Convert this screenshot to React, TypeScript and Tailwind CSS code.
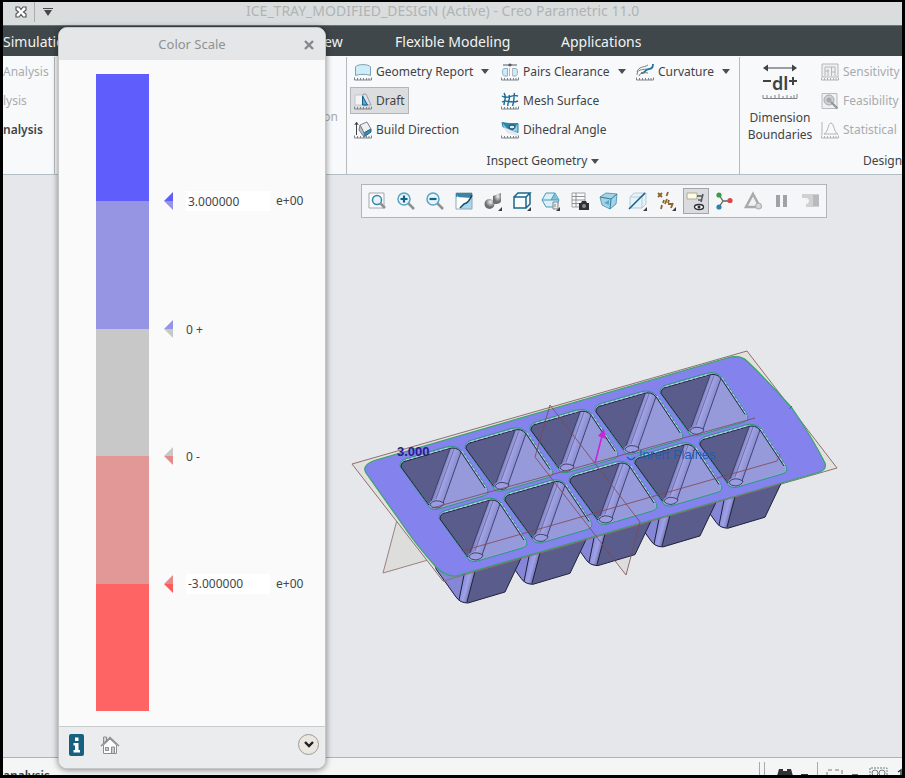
import type { ReactNode } from 'react'
import clsx from 'clsx'

const Caret = () => (
  <svg viewBox="0 0 8 5" className="h-[5px] w-2 shrink-0" fill="#4a4f52">
    <path d="M0 0h8L4 5z" />
  </svg>
)

function Glyph({ children, className }: { children: ReactNode; className?: string }) {
  return (
    <svg viewBox="0 0 18 18" className={clsx('size-[18px] shrink-0', className)} fill="none">
      {children}
    </svg>
  )
}

const Ruler = ({ color = '#7d8386' }: { color?: string }) => (
  <path d="M.5 14.5v2.500h17v-2.500M3.500 17v-2M6.500 17v-2M9.500 17v-2M12.500 17v-2M15 17v-2" stroke={color} />
)

const reportIcon = (
  <Glyph>
    <path d="M1.500 12.500V4C3 .8 15 .8 16.500 4v8.500c-3-1.500-12-1.500-15 0z" fill="#cdeef8" stroke="#7fa0b0" />
    <Ruler />
  </Glyph>
)

const draftIcon = (
  <Glyph>
    <path d="M1 3h8v10H1z" fill="#f3f4f5" stroke="#c3c7ca" />
    <path d="M9 2h3l5 11H9z" fill="#dfe3e6" stroke="#9aa1a5" />
    <path d="M8.500 13V4l5 9z" fill="#57a9cf" stroke="#145f88" />
    <Ruler />
  </Glyph>
)

const buildIcon = (
  <Glyph>
    <path d="M2.500 14V2M.8 4 2.500 1.200 4.200 4" stroke="#3c4245" />
    <path d="m6 4 7-3 4 7-7 4z" fill="#eef0f1" stroke="#7c8488" />
    <path d="m10 12 7-4v3l-7 5z" fill="#3c8db5" stroke="#1d6389" />
    <path d="m6 4 4 8v4L5 9z" fill="#b9c2c7" stroke="#7c8488" />
    <Ruler />
  </Glyph>
)

const pairsIcon = (
  <Glyph>
    <path d="M2 2h14" stroke="#53595c" />
    <path d="M9 .2 11 2 9 3.800 7 2z" fill="#53595c" />
    <path d="M6.500 5.500H3c-2 .5-2 6.500 0 7.500h3.500zM11.500 5.500H15c2 .5 2 6.500 0 7.500h-3.500z" fill="#cdeaf6" stroke="#8db3c7" />
    <path d="M8.500 5v8M11.500 5v8" stroke="#b5babd" />
    <Ruler />
  </Glyph>
)

const meshIcon = (
  <Glyph>
    <path
      d="M1 4c5 4 9-2 16 0M1 10c5-3 9 2 16-1M3 1c3 4 0 8 0 12M8 3c2 4-2 7-1 11M13.500 1c-1 5 0 8-2 13"
      stroke="#1c6c93"
      strokeWidth="1.400"
    />
    <Ruler />
  </Glyph>
)

const dihedralIcon = (
  <Glyph>
    <path d="M1 1.500 8 3l9-.5v9L9 10 2 6z" fill="#8fd0ea" stroke="#2a7da3" />
    <path d="m1 1.500 5 6 5 3 6-8z" fill="#2f86ad" />
    <ellipse cx="11" cy="6" rx="3" ry="2" fill="#d4eef8" stroke="#12384a" />
    <path d="m2 6 15 6v3L6 12z" fill="#e4e8ea" />
    <Ruler />
  </Glyph>
)

const curvatureIcon = (
  <Glyph>
    <path d="M5 10c5 1 3-4 8-4 3 0 4-2 4-5" stroke="#1c77a8" strokeWidth="1.800" />
    <path d="M1 9c2-6 6-4 11-7M1 12c0-6 5-5 9-6M3 13c1-3 4-4 9-3" stroke="#767d81" />
    <Ruler />
  </Glyph>
)

const sensitivityIcon = (
  <Glyph>
    <path d="M1 1h16v13H1z" fill="#eff0f1" stroke="#b4b8ba" />
    <path d="M4 4h10v9M4 4v9M7 6v7M10.500 4v9M4 8h4M10 9h4" stroke="#b4b8ba" />
    <Ruler color="#aeb2b4" />
  </Glyph>
)

const feasibilityIcon = (
  <Glyph>
    <path d="M1 1.500h15v15H1z" fill="#eff0f1" stroke="#b9bcbe" />
    <circle cx="8" cy="8" r="5" fill="#cfd2d4" stroke="#a5aaad" />
    <circle cx="8" cy="8" r="2.500" fill="#a5aaad" />
    <path d="m10 10 6.500 6.500" stroke="#8f9497" strokeWidth="2" />
  </Glyph>
)

const statisticalIcon = (
  <Glyph>
    <path d="M1 1v13M3 13c4-1 4-11 7-11s3 10 7 11z" stroke="#b0b4b6" />
    <Ruler color="#b0b4b6" />
  </Glyph>
)

type Command = { label: string; icon: ReactNode; menu?: boolean; pressed?: boolean }

const inspectColumns: { width: string; items: Command[] }[] = [
  {
    width: 'w-[147px]',
    items: [
      { label: 'Geometry Report', icon: reportIcon, menu: true },
      { label: 'Draft', icon: draftIcon, pressed: true },
      { label: 'Build Direction', icon: buildIcon },
    ],
  },
  {
    width: 'w-[135px]',
    items: [
      { label: 'Pairs Clearance', icon: pairsIcon, menu: true },
      { label: 'Mesh Surface', icon: meshIcon },
      { label: 'Dihedral Angle', icon: dihedralIcon },
    ],
  },
  { width: 'w-[104px]', items: [{ label: 'Curvature', icon: curvatureIcon, menu: true }] },
]

const designStudies: Command[] = [
  { label: 'Sensitivity', icon: sensitivityIcon },
  { label: 'Feasibility', icon: feasibilityIcon },
  { label: 'Statistical', icon: statisticalIcon },
]

function CommandButton({ label, icon, menu, pressed }: Command) {
  return (
    <button
      type="button"
      aria-pressed={pressed}
      className={clsx(
        'flex h-[27px] w-max items-center gap-1 border px-[3px] whitespace-nowrap',
        pressed ? 'border-[#b3b5b8] bg-[#dcdddf]' : 'border-transparent'
      )}
    >
      {icon}
      <span>{label}</span>
      {menu && (
        <span className="pl-1">
          <Caret />
        </span>
      )}
    </button>
  )
}

function TitleBar() {
  return (
    <header className="flex h-[23px] shrink-0 items-center bg-[#d9dddd]">
      <div className="flex h-full w-[243px] shrink-0 items-center pb-[3px] pl-3">
        <button type="button" aria-label="Close window">
          <svg viewBox="0 0 12 12" className="size-3">
            <path
              d="M1 1h3l2 2.500L8 1h3v3L8.500 6 11 8v3H8L6 8.500 4 11H1V8l2.500-2L1 4z"
              fill="#fff"
              stroke="#55595b"
              strokeWidth="1.200"
            />
          </svg>
        </button>
        <span className="ml-[7px] h-full w-px bg-[#a9adaf]" />
        <button type="button" aria-label="Customize toolbar" className="ml-2">
          <svg viewBox="0 0 10 8" className="h-2 w-[10px]" fill="#45494b">
            <path d="M0 0h10v1H0zM1 2h8L5 8z" />
          </svg>
        </button>
      </div>
      <h1 className="pb-[5px] text-sm leading-5 whitespace-nowrap text-[#b0b4b5]">
        ICE_TRAY_MODIFIED_DESIGN (Active) - Creo Parametric 11.0
      </h1>
    </header>
  )
}

function MenuTabs() {
  return (
    <nav className="flex h-[31px] shrink-0 items-center border-t border-[#6a7274] bg-[#3f474a] pt-px text-sm text-[#f1f3f3]">
      <a href="#simulation" className="w-[309px]">
        Simulation
      </a>
      <a href="#view" className="w-[83px]">
        View
      </a>
      <a href="#flexible" className="w-[166px]">
        Flexible Modeling
      </a>
      <a href="#applications">Applications</a>
    </nav>
  )
}

function Ribbon() {
  return (
    <section className="flex h-[119px] shrink-0 border-b border-[#b4bfc5] bg-[#f8f9fb] pt-px text-xs leading-4 text-[#3f4447]">
      <ul className="w-[52px] shrink-0 overflow-hidden border-r border-[#b7babc]">
        <li className="flex h-[29px] items-center text-[#a8abad]">Analysis</li>
        <li className="flex h-[29px] items-center text-[#a8abad]">lysis</li>
        <li className="flex h-[29px] items-center font-semibold">nalysis</li>
      </ul>
      <div className="flex w-[292px] shrink-0 justify-end border-r border-[#b7babc] pt-[52px] pr-2 text-[#a8abad]">
        Section
      </div>
      <div className="flex w-[393px] shrink-0 flex-col border-r border-[#b7babc]">
        <div className="flex pl-[3px]">
          {inspectColumns.map((column, i) => (
            <ul key={i} className={column.width}>
              {column.items.map((item) => (
                <li key={item.label} className="flex h-[29px] items-center">
                  <CommandButton {...item} />
                </li>
              ))}
            </ul>
          ))}
        </div>
        <button type="button" className="flex flex-1 items-center justify-center gap-1 pt-1">
          Inspect Geometry <Caret />
        </button>
      </div>
      <div className="flex min-w-0 flex-1 overflow-hidden">
        <button type="button" className="flex h-full w-20 shrink-0 flex-col items-center gap-2 pt-[6px] leading-[17px]">
          <svg viewBox="0 0 36 38" className="h-[38px] w-9 shrink-0" fill="none" stroke="#3e4346">
            <path d="M3 5h30" />
            <path d="M6 1.500 1 5l5 3.500zM30 1.500 35 5l-5 3.500z" fill="#3e4346" stroke="none" />
            <path d="M1 18h8M27 18h8M31 14v8" strokeWidth="2" />
            <text x="10" y="27" fontSize="18" fontWeight="600" fill="#3e4346" stroke="none">
              dl
            </text>
            <path d="M1 32v3.500h34V31M5 35v-3M9 35v-2M13 35v-3M17 35v-4M21 35v-2M25 35v-3M29 35v-2M32 35v-3" stroke="#7f8588" />
          </svg>
          <span>
            Dimension
            <br />
            Boundaries
          </span>
        </button>
        <div className="flex min-w-0 flex-col text-[#a8abad]">
          <ul>
            {designStudies.map((item) => (
              <li key={item.label} className="-ml-[3px] flex h-[29px] items-center">
                <CommandButton {...item} />
              </li>
            ))}
          </ul>
          <span className="flex flex-1 items-center pt-1 pl-[43px] text-[#3f4447]">Design</span>
        </div>
      </div>
    </section>
  )
}

const Corner = () => <path d="M19 16v4h-4z" fill="#3b3f41" />

const viewTools: { label: string; pressed?: boolean; art: ReactNode }[] = [
  {
    label: 'Refit',
    art: (
      <>
        <path d="M2 2h15v15H2z" fill="#fbfbfb" stroke="#a3a7a9" />
        <circle cx="10" cy="9" r="4.500" fill="#e6f5fb" stroke="#3286ae" strokeWidth="1.500" />
        <path d="m13 12 5 5" stroke="#8d9193" strokeWidth="2.500" />
      </>
    ),
  },
  {
    label: 'Zoom In',
    art: (
      <>
        <path d="m12 12 6 6" stroke="#8d9193" strokeWidth="2.500" />
        <circle cx="8" cy="8" r="6" fill="#e6f5fb" stroke="#5ba3c4" strokeWidth="1.500" />
        <path d="M8 4.500v7M4.500 8h7" stroke="#14618b" strokeWidth="2.200" />
      </>
    ),
  },
  {
    label: 'Zoom Out',
    art: (
      <>
        <path d="m12 12 6 6" stroke="#8d9193" strokeWidth="2.500" />
        <circle cx="8" cy="8" r="6" fill="#e6f5fb" stroke="#5ba3c4" strokeWidth="1.500" />
        <path d="M4.500 8h7" stroke="#14618b" strokeWidth="2.200" />
      </>
    ),
  },
  {
    label: 'Repaint',
    art: (
      <>
        <path d="M2 2h16v16H2z" fill="#fff" />
        <path d="M18 2v16H6l4-5c4-1 7-5 8-11z" fill="#a9d8ea" />
        <path d="M2 2h16v16H2z" stroke="#8fa9b6" />
        <path d="M2 6V2h16v5z" fill="#3c83a5" />
        <path d="M3 17V5l9 7z" fill="#fff" />
        <path d="m6 17 4-4c4-1 6-4 8-9" stroke="#17506d" strokeWidth="1.600" />
      </>
    ),
  },
  {
    label: 'Rendering Options',
    art: (
      <>
        <circle cx="6.500" cy="13" r="5" fill="url(#metal)" />
        <path d="M10 5 18 2v8c0 3-6 4-8 2z" fill="url(#metal)" />
        <Corner />
      </>
    ),
  },
  {
    label: 'Display Style',
    art: (
      <>
        <path d="M2 6 6 2h12l-4 4v11H2z" fill="#f6fbfd" />
        <path d="M2 6h12v11H2zM2 6l4-4h12l-4 4M18 2v11l-4 4" stroke="#1b678d" strokeWidth="1.500" />
        <Corner />
      </>
    ),
  },
  {
    label: 'Saved Orientations',
    art: (
      <>
        <path d="m1 9 4-7h9l4 7-3 7H5z" fill="#d8f0f8" stroke="#4d98ba" />
        <path d="m10 9 4-7 4 7z" fill="#7fc2dd" />
        <path d="M1 9h17M10 9l4-7" stroke="#4d98ba" />
        <path d="M12 11h5v7h-5zM14 13v3" fill="#eceded" stroke="#808587" />
        <Corner />
      </>
    ),
  },
  {
    label: 'View Manager',
    art: (
      <>
        <path d="M2 2h13v14H2z" fill="#fafafa" stroke="#9da1a3" />
        <path d="M2 5.500h13M2 9h13M2 12.500h13M6 2v14" stroke="#8d9193" />
        <path d="M9 12h2l1-2h4l1 2h2v7H9z" fill="#2d3133" />
        <circle cx="14" cy="15" r="2" fill="#888d8f" />
      </>
    ),
  },
  {
    label: 'Perspective View',
    art: (
      <>
        <path d="m1 6 6-4 11 1-1 10-6 5-8-4z" fill="#a4d3e6" stroke="#5b9dbb" />
        <path d="m1 6 11 2 6-5M12 8l-1 10" stroke="#35799a" />
        <path d="m5 12 5-3v5z" fill="#5aa6c8" />
      </>
    ),
  },
  {
    label: 'Section',
    art: (
      <>
        <path d="M2 6 6 2h12v11l-4 4H2z" fill="#e5f3f8" stroke="#b6cbd5" />
        <path d="M2 6h12v11M14 6l4-4" stroke="#b6cbd5" />
        <path d="M1 18 17 2" stroke="#17618a" strokeWidth="1.600" />
        <Corner />
      </>
    ),
  },
  {
    label: 'Datum Display',
    art: (
      <>
        <path
          d="m1 2 4 4M5 2 1 6M11 1l-1.500 4M7 9l-1 3M5 14l-1 4M10 8l-2 5M11 13h5M12 9l-1 3M16 12l-2 5"
          stroke="#8a642b"
          strokeWidth="1.800"
        />
        <Corner />
      </>
    ),
  },
  {
    label: 'Annotation Display',
    pressed: true,
    art: (
      <>
        <path d="M1 2h10v6H1z" fill="#fffbe9" stroke="#b0a98e" />
        <path d="M11 5h6M17 3l-2 8M12 9h3" stroke="#55595b" strokeWidth="1.600" />
        <ellipse cx="13" cy="16" rx="4.500" ry="2.500" fill="#fff" stroke="#2c2f31" strokeWidth="1.400" />
        <circle cx="13" cy="16" r="1.500" fill="#2c2f31" />
      </>
    ),
  },
  {
    label: 'Spin Center',
    art: (
      <>
        <path d="m4 4 4 6-4 6M8 10h7" stroke="#5f6466" strokeWidth="1.300" />
        <circle cx="4" cy="4" r="2.600" fill="#3e9a49" />
        <circle cx="4" cy="16" r="2.600" fill="#2b83b5" />
        <circle cx="15" cy="9.500" r="2.600" fill="#d8464a" />
      </>
    ),
  },
  {
    label: 'Simulate',
    art: (
      <>
        <path d="m9 3 7 13H2z" fill="#f1f1f1" stroke="#a8abad" strokeWidth="2.500" />
        <circle cx="14.500" cy="15" r="3" fill="#d5d7d8" stroke="#a8abad" />
      </>
    ),
  },
  { label: 'Pause', art: <path d="M3 4h4v12H3zM10 4h4v12h-4z" fill="#a0a3a6" /> },
  {
    label: 'Results',
    art: (
      <>
        <path d="M0 3h17v13H4v-3c4 0 4-6 0-6H0z" fill="#cfd1d3" />
        <path d="M11 4h6v11h-6z" fill="#b8bbbe" />
      </>
    ),
  },
]

function ViewToolbar() {
  return (
    <div role="toolbar" aria-label="Graphics" className="mt-[9px] ml-[358px] flex h-[34px] w-max items-center border border-[#b2b4b8] bg-[#f5f6f7]">
      {viewTools.map((tool) => (
        <button
          key={tool.label}
          type="button"
          aria-label={tool.label}
          aria-pressed={tool.pressed}
          className="flex w-[29px] justify-center"
        >
          <span
            className={clsx(
              'flex size-[26px] items-center justify-center border',
              tool.pressed ? 'border-[#a4a6aa] bg-[#dadbde]' : 'border-transparent'
            )}
          >
            <svg viewBox="0 0 20 20" className="size-5" fill="none">
              {tool.art}
            </svg>
          </span>
        </button>
      ))}
    </div>
  )
}

// One cavity of the tray, drawn from the top-left corner of its rim
function Pocket({ x, y }: { x: number; y: number }) {
  return (
    <g transform={`translate(${x} ${y})`} strokeLinejoin="round">
      <path d="M0 4Q0-1 5-3L46-15Q56-18 63-10L87 26Q90 32 83 34L42 46Q34 49 30 46Z" fill="#93a6dd" stroke="#2a9a78" />
      <path d="M1 5Q1 0 6-1L48-13Q56-16 61-10L85 26Q88 31 82 33L42 45Q34 47 31 44Z" fill="#979ada" />
      <path d="M1 5Q1 0 6-1L50-13 31 39 29 42Z" fill="#5a5c8b" />
      <path d="M50-13Q57-15 61-10L43 41Q37 36 31 39Z" fill="url(#pocket-fillet)" />
      <path d="M50-13 31 39M61-10 43 41" stroke="#2c2e55" strokeWidth=".8" />
      <path d="M54-13 36 37" stroke="#4a4d80" strokeWidth=".6" />
      <path d="M30 42Q35 36 44 41 43 45 37 46 32 46 30 43Z" fill="#9b9de0" stroke="#2c2e55" strokeWidth=".8" />
      <path d="M1 5Q1 0 6-1L48-13Q56-16 61-10L85 26M1 5 29 43" stroke="#20223d" />
      <path d="M62-11 87 27M6-2 48-14" stroke="#c9ecec" strokeWidth=".8" strokeDasharray="3 2" />
    </g>
  )
}

function Cup({ index }: { index: number }) {
  return (
    <g transform={`translate(${index * 65} ${index * -18.7})`} strokeLinejoin="round">
      <path d="M435 562 436 569 456 597Q460 603 468 603L505 592 524 552 470 545Z" fill="#5a5c8b" />
      <path d="M435 562 436 569 456 597 459 600 467 560Z" fill="#8587d6" />
      <path d="M467 560 459 600Q462 603 467 602L478 560Z" fill="url(#cup-fillet)" />
      <path d="M435 562 436 569 456 597Q460 603 468 603L505 592 524 552M467 560 459 600M478 560 467 602" stroke="#20223d" fill="none" />
    </g>
  )
}

const slots = [4, 3, 2, 1, 0]

function IceTray() {
  return (
    <svg viewBox="350 345 490 262" className="mt-[127px] ml-[347px] h-[262px] w-[490px]" role="img" aria-label="Ice tray model" fill="none">
      <defs>
        <linearGradient id="pocket-fillet" gradientUnits="userSpaceOnUse" x1="40" y1="10" x2="52" y2="14">
          <stop offset="0" stopColor="#7073ae" />
          <stop offset=".45" stopColor="#a3a5e6" />
          <stop offset="1" stopColor="#8c8fd2" />
        </linearGradient>
        <linearGradient id="cup-fillet" gradientUnits="userSpaceOnUse" x1="463" y1="579" x2="474" y2="582">
          <stop offset="0" stopColor="#8a8cdd" />
          <stop offset=".5" stopColor="#9fa1e8" />
          <stop offset="1" stopColor="#6669a0" />
        </linearGradient>
        <radialGradient id="metal" cx=".6" cy=".3">
          <stop offset="0" stopColor="#f2f2f2" />
          <stop offset="1" stopColor="#6b6e70" />
        </radialGradient>
      </defs>
      <path d="m397 520-14 53 52-15z" fill="#dddddc" stroke="#9c8182" />
      <path d="m626 575-15-22 20-4z" fill="#dddddc" />
      <path d="M352 464 747 351 837 468 443 581Z" fill="#e2e1dd" stroke="#8d6f70" />
      {slots.map((i) => (
        <Cup key={i} index={i} />
      ))}
      <path
        d="M376 460 727 358Q740 354 747 361 770 383 792 408 812 437 825 463 827 469 820 472L456 576Q446 577 436 567 416 545 400 521L366 473Q361 465 376 460Z"
        fill="#8482ec"
        stroke="#35a56b"
        strokeWidth="1.200"
      />
      <path d="M443 581 780 484" stroke="#8d6f70" />
      {slots.map((i) => (
        <Pocket key={i} x={400 + i * 65} y={462 - i * 18.4} />
      ))}
      {slots.map((i) => (
        <Pocket key={i} x={439 + i * 65} y={514 - i * 18.5} />
      ))}
      <path d="M550 405 640 522 626 575 535 457ZM462 551 777 461 780 454M432 508 755 418M789 409 792 406" stroke="#7f4650" strokeOpacity=".8" />
      <path d="m595 463 7-27" stroke="#c726d8" strokeWidth="1.600" />
      <path d="m604 429 2 10-8-3z" fill="#c726d8" />
      <text x="397" y="456" fontSize="13" fontWeight="700" fill="#2a1a8c" className="font-['Liberation_Sans']">
        3.000
      </text>
      <path d="M627 457q4 5 8 0M633 451v2" stroke="#1f5fb0" strokeWidth="1.300" />
      <text x="639" y="459" fontSize="13" fill="#1c5fb2" className="font-['Liberation_Sans']">
        Inrert Plaines
      </text>
    </svg>
  )
}

function StatusBar() {
  return (
    <footer className="flex h-[18px] shrink-0 items-start justify-between overflow-hidden border-t border-[#a9b5bc] bg-[#f4f6f6] text-[#3a3e40]">
      <span className="pt-[10px] text-xs leading-4 font-semibold">analysis</span>
      <div className="flex items-start gap-2 pt-1">
        <span className="flex h-4 gap-1 pr-1">
          <span className="w-px bg-[#a7aaac]" />
          <span className="w-px bg-[#a7aaac]" />
        </span>
        <svg viewBox="0 0 32 14" className="h-[14px] w-8" fill="#303335">
          <path d="M2 7h4v2h4V7h4l2 7H0zM24 12h7v2h-7z" />
        </svg>
        <span className="h-4 w-px bg-[#a7aaac]" />
        <svg viewBox="0 0 76 14" className="h-[14px] w-[76px]" fill="none" stroke="#777b7d">
          <path d="M1 14V8h15v6" strokeDasharray="4 3" />
          <path d="M26 13h6M75 14V8l-3 2" stroke="#3a3e40" strokeWidth="1.500" />
          <path d="M44 14V6h17v8" strokeDasharray="2 1" />
          <circle cx="49" cy="11" r="3" />
          <circle cx="56" cy="11" r="3" />
        </svg>
      </div>
    </footer>
  )
}

const scaleColors = ['bg-[#5f5efd]', 'bg-[#9695e3]', 'bg-[#c8c8c8]', 'bg-[#e19897]', 'bg-[#fe6464]']

const thresholds = [
  { id: 'upper', value: '3.000000', above: '#5f5efd', below: '#9695e3' },
  { id: 'zero-plus', text: '0 +', above: '#9695e3', below: '#c8c8c8' },
  { id: 'zero-minus', text: '0 -', above: '#c8c8c8', below: '#e58a8a' },
  { id: 'lower', value: '-3.000000', above: '#e58a8a', below: '#fe5a5a' },
]

function ColorScaleDialog() {
  return (
    <div
      role="dialog"
      aria-labelledby="scale-title"
      className="absolute top-[25px] bottom-[6px] left-[55px] flex w-[268px] flex-col overflow-hidden rounded-[9px] border border-[#c4c6c8] bg-[#fafafa] text-[#444749] shadow-[0_1px_6px_rgba(0,0,0,0.45)]"
    >
      <div className="grid h-8 shrink-0 grid-cols-[32px_1fr_32px] items-center bg-[#e5e6e8] pt-px text-[#8e9193]">
        <h2 id="scale-title" className="col-start-2 text-center text-[13px]">
          Color Scale
        </h2>
        <button type="button" aria-label="Close" className="flex justify-center">
          <svg viewBox="0 0 10 10" className="size-[10px]" stroke="#85888a" strokeWidth="2.400">
            <path d="m1 1 8 8M9 1 1 9" />
          </svg>
        </button>
      </div>
      <div className="flex flex-1 pt-[14px] pb-[15px] pl-[37px] text-xs">
        <div className="flex w-[53px] flex-col">
          {scaleColors.map((color) => (
            <div key={color} className={clsx('flex-1', color)} />
          ))}
        </div>
        <div className="flex flex-1 flex-col pl-[14px]">
          <span className="flex-1" />
          {thresholds.map((t) => (
            <div key={t.id} className="flex flex-[2] items-center">
              <svg viewBox="0 0 10 18" className="h-[18px] w-[10px]">
                <path d="M1 9 10 0v9z" fill={t.above} />
                <path d="M1 9h9v9z" fill={t.below} />
              </svg>
              {t.value ? (
                <label className="flex items-center">
                  <input
                    aria-label={`${t.id} limit`}
                    defaultValue={t.value}
                    className="ml-[13px] h-5 w-[84px] bg-white px-[2px]"
                  />
                  <span className="pl-[6px]">e+00</span>
                </label>
              ) : (
                <span className="pt-[2px] pl-[13px]">{t.text}</span>
              )}
            </div>
          ))}
          <span className="flex-1" />
        </div>
      </div>
      <div className="flex h-[42px] shrink-0 items-center border-t border-[#c9cccf] bg-[#ebeced] px-[6px] pb-[6px]">
        <button type="button" aria-label="Information" className="px-1">
          <svg viewBox="0 0 15 22" className="h-[22px] w-[15px]">
            <rect width="15" height="22" rx="2" fill="#17607f" />
            <path d="M6 3.500h3.500V7H6zM4.500 9h5v7H11v2.500H4.500V16H6v-4.500H4.500z" fill="#fff" />
          </svg>
        </button>
        <button type="button" aria-label="Reset" className="ml-3">
          <svg viewBox="0 0 20 20" className="size-5" fill="none" stroke="#8b8f91">
            <path d="M3.500 9V2h3v5" fill="#d4d6d7" />
            <path d="M3.500 10v8.500h13V10L10 4z" fill="#fcfcfc" />
            <path d="m1 11 9-8.500 9 8.500" strokeWidth="1.500" />
            <path d="M5.500 12.500h3v3h-3zM11.500 18v-6h3v6" fill="#c9cccd" />
          </svg>
        </button>
        <button
          type="button"
          aria-label="More options"
          className="ml-auto flex size-[21px] items-center justify-center rounded-full border border-[#9a9b98] bg-[#e9e7e0]"
        >
          <svg viewBox="0 0 10 7" className="h-[7px] w-[10px]" fill="none" stroke="#1d1f20" strokeWidth="2.400">
            <path d="m1 1 4 4 4-4" />
          </svg>
        </button>
      </div>
    </div>
  )
}

export default function App() {
  return (
    <div className="relative flex h-screen flex-col overflow-hidden border-[3px] border-t-2 border-black bg-[#e6e7ea] font-['Noto_Sans',sans-serif]">
      <TitleBar />
      <MenuTabs />
      <Ribbon />
      <main className="flex-1 overflow-hidden bg-[#e6e7ea]">
        <ViewToolbar />
        <IceTray />
      </main>
      <StatusBar />
      <ColorScaleDialog />
    </div>
  )
}
